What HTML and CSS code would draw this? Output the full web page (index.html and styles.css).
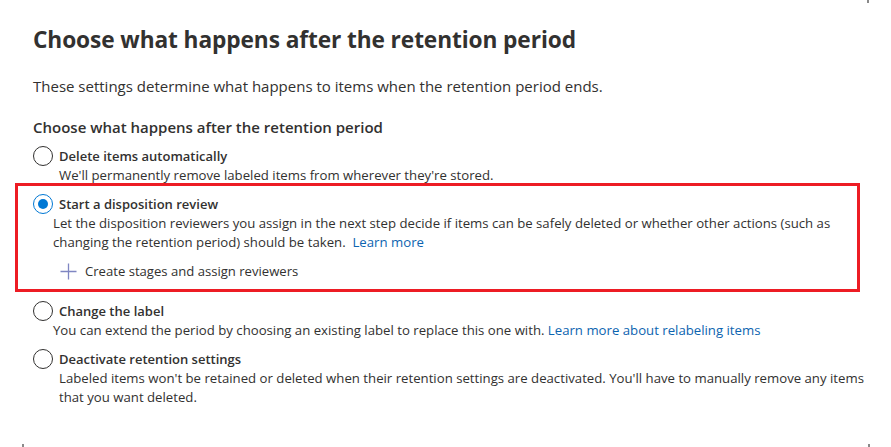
FILE: index.html
```html
<!DOCTYPE html>
<html lang="en">
<head>
<meta charset="utf-8">
<title>Choose what happens after the retention period</title>
<link rel="stylesheet" href="styles.css">
</head>
<body>
<main class="page">
  <h1 class="title">Choose what happens after the retention period</h1>
  <p class="intro">These settings determine what happens to items when the retention period ends.</p>
  <h2 class="group-title">Choose what happens after the retention period</h2>
  <div class="options" role="radiogroup">
    <div class="option">
      <div class="option-head"><span class="radio"></span><span class="option-label">Delete items automatically</span></div>
      <div class="option-desc">We'll permanently remove labeled items from wherever they're stored.</div>
    </div>
    <div class="highlight">
      <div class="option">
        <div class="option-head"><span class="radio radio-on"></span><span class="option-label">Start a disposition review</span></div>
        <div class="option-desc option-desc-wide">Let the disposition reviewers you assign in the next step decide if items can be safely deleted or whether other actions (such as changing the retention period) should be taken.&nbsp; <a class="link" href="#">Learn more</a></div>
        <div class="action">
          <svg class="plus" width="17" height="17" viewBox="0 0 17 17" aria-hidden="true"><path d="M8.5 0.5V16.5M0.5 8.5H16.5" stroke="currentColor" stroke-width="1.3" fill="none"/></svg>
          <span>Create stages and assign reviewers</span>
        </div>
      </div>
    </div>
    <div class="option">
      <div class="option-head"><span class="radio"></span><span class="option-label">Change the label</span></div>
      <div class="option-desc option-desc-wide">You can extend the period by choosing an existing label to replace this one with. <a class="link" href="#">Learn more about relabeling items</a></div>
    </div>
    <div class="option">
      <div class="option-head"><span class="radio"></span><span class="option-label">Deactivate retention settings</span></div>
      <div class="option-desc">Labeled items won't be retained or deleted when their retention settings are deactivated. You'll have to manually remove any items that you want deleted.</div>
    </div>
  </div>
  <span class="tick tick-tr"></span>
  <span class="tick tick-bl"></span>
  <span class="tick tick-br"></span>
</main>
</body>
</html>
```
FILE: styles.css
```css
html, body {
  margin: 0;
  padding: 0;
  background: #ffffff;
}
body {
  font-family: "Segoe UI", "Open Sans", "Noto Sans", sans-serif;
  color: #323130;
  width: 891px;
  height: 447px;
  overflow: hidden;
}
.page {
  position: relative;
  height: 447px;
  box-sizing: border-box;
  padding: 24px 0 0 33px;
}
.title {
  margin: 0;
  font-size: 22.7px;
  line-height: 32px;
  font-weight: 700;
  letter-spacing: -0.1px;
}
.intro {
  margin: 20px 0 0;
  font-size: 15px;
  line-height: 20px;
}
.group-title {
  margin: 20px 0 0;
  font-size: 15px;
  line-height: 22px;
  font-weight: 600;
}
.options {
  margin-top: 8px;
  display: flex;
  flex-direction: column;
}
.option {
  display: flex;
  flex-direction: column;
}
.options > .option + .option,
.highlight + .option {
  margin-top: 9px;
}
.option-head {
  display: flex;
  align-items: center;
  gap: 6px;
  height: 20px;
}
.radio {
  width: 20px;
  height: 20px;
  box-sizing: border-box;
  border: 1px solid #323130;
  border-radius: 50%;
  flex: none;
  display: flex;
  align-items: center;
  justify-content: center;
}
.radio-on {
  border-color: #0078d4;
}
.radio-on::after {
  content: "";
  width: 10px;
  height: 10px;
  border-radius: 50%;
  background: #0078d4;
}
.option-label {
  font-size: 13px;
  font-weight: 600;
  line-height: 20px;
}
.option-desc {
  font-size: 13.2px;
  line-height: 19px;
  padding-left: 26px;
  max-width: 812px;
}
.option-desc-wide {
  padding-left: 20px;
}
.link {
  color: #0c64b0;
  text-decoration: none;
}
.highlight {
  margin: -2px 0 0 -18px;
  width: 845px;
  box-sizing: border-box;
  border: 3px solid #ed1c24;
  padding: 8px 0 8px 15px;
}
.action {
  display: flex;
  align-items: center;
  gap: 8px;
  margin: 9px 0 0 27px;
  height: 20px;
  font-size: 13.1px;
  line-height: 20px;
}
.plus {
  color: #7f86c2;
  flex: none;
}
.tick {
  position: absolute;
  width: 2px;
  height: 3px;
  background: #8a8a8a;
}
.tick-tr { left: 867px; top: 0; }
.tick-bl { left: 22px; top: 444px; }
.tick-br { left: 868px; top: 444px; }
```
